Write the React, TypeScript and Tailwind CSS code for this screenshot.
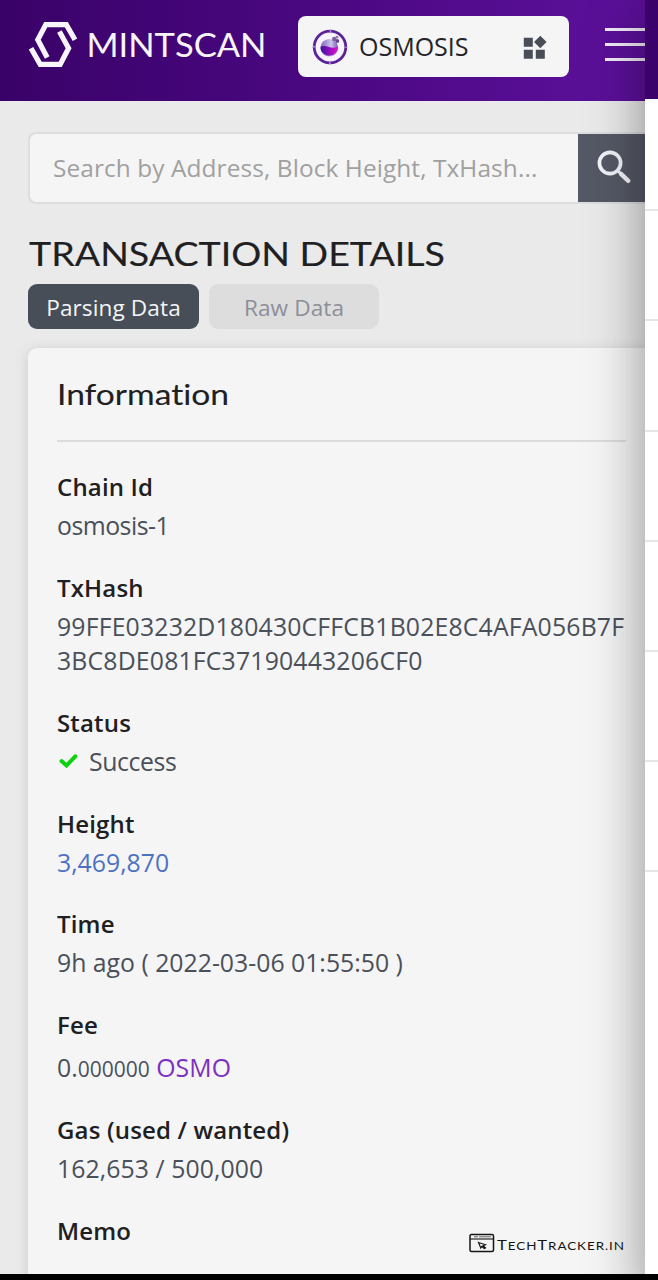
import React from "react";

const menuLines = [0, 1, 2, 3, 4, 5];

function MintscanMark() {
  return (
    <svg className="h-[48px] w-[50px] shrink-0" viewBox="0 0 50 48" fill="none" stroke="#f8f4fc" strokeWidth="5.2">
      <path d="M47 18.8 L38.3 3.6 H17.8 L9.8 18.8 L19.2 36.5" />
      <path d="M31.4 10.5 L40.6 27.2 L32.2 43.4 H12.2 L3 27.2" />
    </svg>
  );
}

function OsmosisMark() {
  return (
    <svg className="h-9 w-9 shrink-0" viewBox="0 0 36 36">
      <defs>
        <linearGradient id="liquid" x1="0" x2="1">
          <stop offset="0" stopColor="#3a169c" />
          <stop offset="0.6" stopColor="#a40bc4" />
          <stop offset="1" stopColor="#e114c8" />
        </linearGradient>
        <linearGradient id="glass" x1="0" x2="1">
          <stop offset="0" stopColor="#7a62be" />
          <stop offset="0.6" stopColor="#cdc4ea" />
          <stop offset="1" stopColor="#7256b8" />
        </linearGradient>
      </defs>
      <circle cx="18" cy="18" r="15.8" fill="#f7f2fb" stroke="#5a2498" strokeWidth="2.8" />
      <circle cx="18" cy="18" r="15.8" fill="none" stroke="#a98acf" strokeWidth="2.8" strokeDasharray="1.6 23.22" strokeDashoffset="0.8" />
      <circle cx="17.3" cy="18.7" r="8.8" fill="url(#glass)" />
      <path d="M8.7 17.5 Q13 16.2 17 18 T25.9 17.7 A8.8 8.8 0 0 1 8.7 20.5Z" fill="url(#liquid)" />
      <circle cx="22.2" cy="10" r="2.2" fill="#7c609c" />
      <circle cx="25.3" cy="12" r="1.9" fill="#64448e" />
      <circle cx="24.9" cy="8.2" r="1.4" fill="#8f78ad" />
    </svg>
  );
}

function Header() {
  return (
    <header className="flex h-[101px] shrink-0 items-start overflow-hidden bg-linear-to-r from-[#390268] to-[#5d109c] pl-[28px]">
      <div className="mt-[21px] flex w-[270px] shrink-0 items-center">
        <MintscanMark />
        <svg className="h-[48px] w-[190px] shrink-0" viewBox="0 0 190 48">
          <text x="8.5" y="36" textLength="180" lengthAdjust="spacingAndGlyphs" fill="#f8f4fc" fontFamily="Lato, sans-serif" fontSize="33.5">
            MINTSCAN
          </text>
        </svg>
      </div>
      <div className="mt-4 flex h-[61px] w-[271px] shrink-0 items-center rounded-lg bg-[#f5f5f6] pl-[14px] pr-[20px] text-[#24242a]">
        <OsmosisMark />
        <span className="ml-[11px] flex-1 text-[25px]">OSMOSIS</span>
        <svg className="h-[30px] w-[30px]" viewBox="0 0 30 30" fill="#484d58">
          <path d="M4.8 5.8h9v9h-9zM4.8 17.8h9v9h-9zM16.8 17.8h9v9h-9zM21.3 3.7l6.3 6.3-6.3 6.3-6.3-6.3z" />
        </svg>
      </div>
      <div className="ml-[36px] mt-[28px] flex w-10 shrink-0 flex-col gap-[12.7px]">
        <i className="h-[2.5px] bg-[#f2ecf8]" />
        <i className="h-[2.5px] bg-[#f2ecf8]" />
        <i className="h-[2.5px] bg-[#f2ecf8]" />
      </div>
    </header>
  );
}

function Row({ label, children }: { label: string; children?: React.ReactNode }) {
  return (
    <div className="pb-[26.3px]">
      <dt className="h-[40px] text-[24px] font-semibold leading-[38.6px] tracking-[0.17px] text-[#202022]">{label}</dt>
      <dd className="text-[24.8px] leading-[34.4px] text-[#4a505a]">{children}</dd>
    </div>
  );
}

export default function App() {
  return (
    <div className="relative flex h-[1280px] w-[658px] flex-col overflow-hidden bg-black font-['Open_Sans',sans-serif]">
      <div className="flex h-[1274px] shrink-0 overflow-hidden">
        <main className="flex w-[645px] shrink-0 flex-col overflow-hidden bg-[#eaeaea]">
          <Header />
          <div className="ml-[28px] mt-[31px] flex h-[72px] w-[640px] shrink-0 overflow-hidden rounded-lg border-2 border-[#dddddd] bg-[#f5f5f5]">
            <div className="w-[548px] shrink-0 whitespace-nowrap pl-[23px] text-[24.4px] leading-[67px] tracking-[0.1px] text-[#a0a0a0]">
              Search by Address, Block Height, TxHash...
            </div>
            <div className="flex flex-1 bg-[#555965] pl-[18px] pt-[15px]">
              <svg className="h-9 w-9" viewBox="0 0 36 36" fill="none" stroke="#f2f4fa" strokeLinecap="round">
                <circle cx="14" cy="14" r="10.6" strokeWidth="3.7" />
                <path d="M22.2 22.2 L24 24" strokeWidth="3" />
                <path d="M25 24.8 L32.3 31.8" strokeWidth="4.4" />
              </svg>
            </div>
          </div>
          <svg className="ml-[28px] mt-[26px] h-[48px] w-[440px] shrink-0" viewBox="0 0 440 48">
            <text x="1" y="36" textLength="416" lengthAdjust="spacingAndGlyphs" fill="#202022" fontFamily="Lato, sans-serif" fontWeight="400" fontSize="33.5" stroke="#202022" strokeWidth="0.15">
              TRANSACTION DETAILS
            </text>
          </svg>
          <div className="ml-[28px] mt-[6px] flex h-[45px] shrink-0 gap-[10px] text-[22.6px] leading-[47px]">
            <div className="w-[171px] rounded-[9px] bg-[#474e57] text-center tracking-[0.1px] text-[#f4f5f8]">Parsing Data</div>
            <div className="w-[170px] rounded-[9px] bg-[#dddddd] text-center tracking-[0.1px] text-[#8b8f99]">Raw Data</div>
          </div>
          <section className="ml-[28px] mt-[19px] h-[940px] w-[640px] shrink-0 rounded-t-[9px] bg-[#f5f5f5] pl-[29px] shadow-[0_2px_14px_rgba(0,0,0,0.13)]">
            <svg className="h-[92px] w-[300px]" viewBox="0 0 300 92">
              <text className="[font-variant-ligatures:none]" x="0" y="56.5" textLength="172" lengthAdjust="spacingAndGlyphs" fill="#202022" fontFamily="Lato, sans-serif" fontSize="28.5" stroke="#202022" strokeWidth="0.1">
                Information
              </text>
            </svg>
            <div className="h-[2px] w-[569px] bg-[#dcdcdc]" />
            <dl className="pt-[26px]">
              <Row label="Chain Id">
                <span className="tracking-[-0.5px]">osmosis-1</span>
              </Row>
              <Row label="TxHash">
                <span className="tracking-[0.17px]">
                  99FFE03232D180430CFFCB1B02E8C4AFA056B7F
                  <br />
                  3BC8DE081FC37190443206CF0
                </span>
              </Row>
              <Row label="Status">
                <span className="flex items-center tracking-[-0.4px]">
                  <svg className="mr-[10px] h-[22px] w-[22px]" viewBox="0 0 22 22" fill="none" stroke="#0bd10f" strokeWidth="4" strokeLinecap="round" strokeLinejoin="miter">
                    <path d="M4.5 11 L9.5 15.5 L18.3 6.3" />
                  </svg>
                  Success
                </span>
              </Row>
              <Row label="Height">
                <span className="text-[#4d72c4]">3,469,870</span>
              </Row>
              <Row label="Time">9h ago ( 2022-03-06 01:55:50 )</Row>
              <Row label="Fee">
                <span className="block h-[39.2px] pt-[4px]">
                  0.<span className="text-[21px] leading-none">000000</span> <span className="tracking-[0.1px] text-[#7c30c0]">OSMO</span>
                </span>
              </Row>
              <Row label="Gas (used / wanted)">
                <span className="tracking-[0.08px]">162,653 / 500,000</span>
              </Row>
              <Row label="Memo" />
            </dl>
          </section>
        </main>
        <aside className="z-10 w-[200px] shrink-0 bg-white shadow-[12px_20px_52px_12px_rgba(0,0,0,0.42)]">
          <div className="h-[99px] bg-[#3b026b]" />
          <div className="h-[112.4px] border-b-2 border-[#e6e6e6]" />
          {menuLines.map((n) => (
            <div key={n} className="h-[110.1px] border-b-2 border-[#e6e6e6]" />
          ))}
        </aside>
      </div>
      <svg className="absolute left-[468px] top-[1230px] z-20 h-[26px] w-[160px]" viewBox="0 0 160 26" fill="none" stroke="#151515">
        <rect x="2" y="4.5" width="23.5" height="17" rx="1.5" strokeWidth="1.5" />
        <path d="M2 9h23.5" strokeWidth="1.1" />
        <path d="M6 6.8h4M11 6.8h12" strokeWidth="1" stroke="#666" />
        <path d="M10.5 12.5l7 2.3-2.5 1 2.5 2-1.2.7-2.5-2-1 1.5z" strokeWidth="1.2" />
        <text x="29" y="20" textLength="128" lengthAdjust="spacingAndGlyphs" letterSpacing="0.8" fill="#151515" stroke="none" fontFamily="Lato, sans-serif" fontSize="14">
          T<tspan fontSize="11.3">ECH</tspan>T<tspan fontSize="11.3">RACKER.IN</tspan>
        </text>
      </svg>
    </div>
  );
}
